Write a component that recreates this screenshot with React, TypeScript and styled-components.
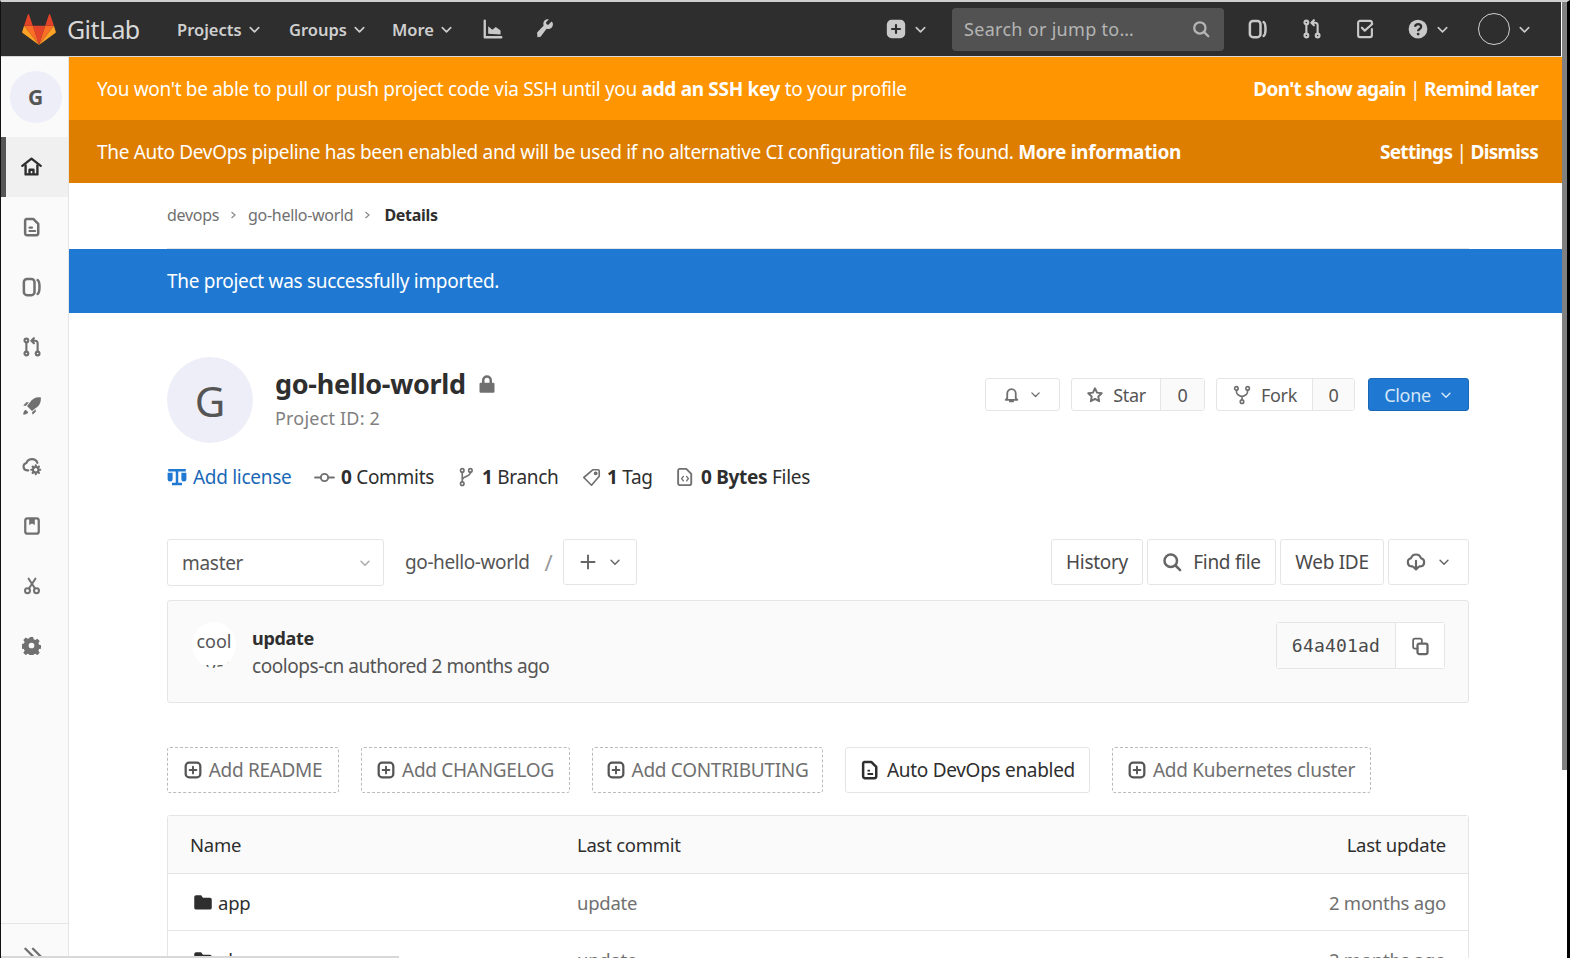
import React from 'react';
import styled, { createGlobalStyle } from 'styled-components';

const GlobalStyle = createGlobalStyle`
  html, body { margin: 0; height: 100%; overflow: hidden; background: #fff; }
  * { box-sizing: border-box; }
  body { font-family: "Noto Sans", "Liberation Sans", sans-serif; color: #2e2e2e; }
`;

const Page = styled.div`
  width: 1570px;
  height: 958px;
  overflow: hidden;
  display: flex;
  flex-direction: column;
  border-left: 1px solid #111;
  border-right: 3px solid #000;
  border-top: 2px solid #cfcfcf;
  position: relative;
`;

const Navbar = styled.header`
  height: 55px;
  flex: none;
  margin-right: 6px;
  background: #2e2e2e;
  border-bottom: 1px solid #d8d8d8;
  display: flex;
  align-items: center;
  padding-left: 21px;
  padding-right: 29px;
  color: #c9c9c9;
`;

const Wordmark = styled.span`
  font-size: 25px;
  color: #d8d8d8;
  margin-left: 11px;
  width: 110px;
  letter-spacing: -0.6px;
`;

const NavLink = styled.span<{ $w: number }>`
  width: ${(p) => p.$w}px;
  flex: none;
  display: flex;
  align-items: center;
  gap: 5px;
  font-size: 16.5px;
  font-weight: 600;
  color: #cfcfcf;
`;

const NavIcon = styled.span<{ $w: number }>`
  width: ${(p) => p.$w}px;
  flex: none;
  display: flex;
  align-items: center;
  gap: 7px;
  color: #c9c9c9;
`;

const Spacer = styled.div`
  flex: 1;
`;

const SearchBox = styled.div`
  width: 272px;
  height: 43px;
  background: #525252;
  border-radius: 4px;
  display: flex;
  align-items: center;
  justify-content: space-between;
  padding: 0 14px 0 12px;
  font-size: 18px;
  color: #b5b5b5;
  margin-right: 24px;
  letter-spacing: 0.3px;
`;

const AvatarRing = styled.span`
  width: 32px;
  height: 32px;
  border-radius: 50%;
  border: 1.5px solid #d0d0d0;
  margin-right: 7px;
  flex: none;
`;

const Body = styled.div`
  flex: 1;
  display: flex;
  min-height: 0;
`;

const Sidebar = styled.aside`
  width: 68px;
  flex: none;
  background: #fafafa;
  border-right: 1px solid #e5e5e5;
  display: flex;
  flex-direction: column;
  position: relative;
`;

const SideAvatarRow = styled.div`
  height: 80px;
  display: flex;
  justify-content: center;
  padding-top: 14px;
  padding-left: 2px;
`;

const SideAvatar = styled.div`
  width: 52px;
  height: 52px;
  border-radius: 50%;
  background: #eeeef8;
  color: #555;
  font-weight: 700;
  font-size: 21px;
  display: flex;
  align-items: center;
  justify-content: center;
`;

const SideItem = styled.div<{ $active?: boolean }>`
  height: 59.87px;
  display: flex;
  align-items: center;
  justify-content: center;
  color: ${(p) => (p.$active ? '#2e2e2e' : '#707070')};
  background: ${(p) => (p.$active ? '#f0f0f0' : 'transparent')};
  border-left: 5px solid ${(p) => (p.$active ? '#555' : 'transparent')};
  padding-right: 11px;
`;

const SideFooter = styled.div`
  margin-top: auto;
  height: 35px;
  border-top: 1px solid #e5e5e5;
  display: flex;
  justify-content: center;
  padding-top: 22px;
  padding-right: 3px;
  color: #707070;
`;

const Main = styled.main`
  flex: 1;
  min-width: 0;
  display: flex;
  flex-direction: column;
  padding-right: 4px;
`;

const Banner = styled.div<{ $bg: string }>`
  height: 63px;
  flex: none;
  background: ${(p) => p.$bg};
  color: #fff;
  display: flex;
  align-items: center;
  justify-content: space-between;
  padding: 0 25px 0 28px;
  font-size: 19px;
  letter-spacing: -0.32px;
  white-space: nowrap;
  b { font-weight: 700; }
`;

const BannerActions = styled.span`
  letter-spacing: -0.7px;
`;

const Container = styled.div`
  width: 1302px;
  margin-left: 98px;
`;

const Breadcrumbs = styled(Container)`
  height: 66px;
  flex: none;
  border-bottom: 1px solid #e5e5e5;
  display: flex;
  align-items: center;
  gap: 10px;
  padding-bottom: 1px;
  font-size: 16px;
  color: #707070;
  letter-spacing: -0.3px;
  b { color: #2e2e2e; font-weight: 700; margin-left: 2px; }
`;

const InfoBanner = styled.div`
  height: 64px;
  flex: none;
  background: #1f78d1;
  color: #fff;
  display: flex;
  align-items: center;
  padding-left: 98px;
  font-size: 19px;
  letter-spacing: -0.3px;
`;

const ProjectHeader = styled(Container)`
  margin-top: 44px;
  height: 86px;
  flex: none;
  display: flex;
  justify-content: space-between;
`;

const ProjectIdentity = styled.div`
  display: flex;
`;

const ProjectAvatar = styled.div`
  width: 86px;
  height: 86px;
  border-radius: 50%;
  background: #eeeef8;
  color: #555;
  font-size: 42px;
  display: flex;
  align-items: center;
  justify-content: center;
  margin-right: 22px;
`;

const ProjectText = styled.div`
  display: flex;
  flex-direction: column;
  padding-top: 8px;
`;

const ProjectTitle = styled.div`
  display: flex;
  align-items: center;
  gap: 11px;
  font-size: 27px;
  font-weight: 700;
  line-height: 38px;
  letter-spacing: -0.3px;
  color: #2e2e2e;
  svg { color: #707070; }
`;

const ProjectId = styled.div`
  font-size: 18px;
  color: #808080;
  line-height: 30px;
  letter-spacing: 0.2px;
`;

const ProjectActions = styled.div`
  display: flex;
  align-items: flex-start;
  padding-top: 21px;
  gap: 11px;
`;

const ButtonGroup = styled.div`
  display: flex;
  height: 33px;
  border: 1px solid #e5e5e5;
  border-radius: 3px;
  font-size: 18px;
  color: #555;
  letter-spacing: -0.3px;
`;

const GroupMain = styled.div<{ $w: number }>`
  width: ${(p) => p.$w}px;
  display: flex;
  align-items: center;
  justify-content: center;
  gap: 9px;
  color: #555;
  svg { color: #707070; }
`;

const GroupCount = styled.div<{ $w: number }>`
  width: ${(p) => p.$w}px;
  display: flex;
  align-items: center;
  justify-content: center;
  border-left: 1px solid #e5e5e5;
  background: #fafafa;
`;

const CloneButton = styled.div`
  height: 33px;
  width: 101px;
  margin-left: 2px;
  background: #1f78d1;
  border: 1px solid #1b69b6;
  border-radius: 3px;
  color: #d5e6f7;
  font-size: 18px;
  letter-spacing: -0.3px;
  display: flex;
  align-items: center;
  justify-content: center;
  gap: 8px;
`;

const Stats = styled(Container)`
  margin-top: 19px;
  height: 30px;
  flex: none;
  display: flex;
  align-items: center;
  font-size: 19px;
  letter-spacing: -0.3px;
  color: #2e2e2e;
  b { font-weight: 700; }
`;

const Stat = styled.span<{ $w: number; $link?: boolean }>`
  width: ${(p) => p.$w}px;
  flex: none;
  display: flex;
  align-items: center;
  gap: 6px;
  white-space: pre;
  color: ${(p) => (p.$link ? '#1b69b6' : '#2e2e2e')};
  svg { color: ${(p) => (p.$link ? '#1f78d1' : '#707070')}; flex: none; }
`;

const TreeBar = styled(Container)`
  margin-top: 47px;
  height: 48px;
  flex: none;
  display: flex;
  align-items: flex-start;
  justify-content: space-between;
`;

const TreeLeft = styled.div`
  display: flex;
  align-items: flex-start;
`;

const TreeRight = styled.div`
  display: flex;
  gap: 4px;
`;

const BranchSelect = styled.div`
  width: 217px;
  height: 47px;
  border: 1px solid #e5e5e5;
  border-radius: 3px;
  padding: 0 11px 0 14px;
  display: flex;
  align-items: center;
  justify-content: space-between;
  font-size: 19px;
  color: #555;
  letter-spacing: -0.3px;
  svg { color: #aaa; }
`;

const PathCrumb = styled.div`
  height: 46px;
  display: flex;
  align-items: center;
  font-size: 19px;
  color: #555;
  letter-spacing: -0.4px;
  margin-left: 21px;
  i { font-style: normal; color: #999; margin-left: 15px; margin-right: 11px; font-size: 22px; }
`;

const ToolButton = styled.div<{ $w: number }>`
  width: ${(p) => p.$w}px;
  height: 46px;
  border: 1px solid #e5e5e5;
  border-radius: 3px;
  display: flex;
  align-items: center;
  justify-content: center;
  gap: 11px;
  font-size: 19px;
  color: #4a4a4a;
  letter-spacing: -0.3px;
  svg { color: #666; }
`;

const CommitCard = styled(Container)`
  margin-top: 13px;
  height: 103px;
  flex: none;
  border: 1px solid #e5e5e5;
  border-radius: 3px;
  background: #fafafa;
  display: flex;
  align-items: flex-start;
  justify-content: space-between;
  padding: 21px 23px 0 24px;
`;

const CommitLeft = styled.div`
  display: flex;
  align-items: flex-start;
  gap: 16px;
`;

const BrokenAvatar = styled.div`
  width: 44px;
  height: 46px;
  border-radius: 50%;
  background: #fff;
  overflow: hidden;
  font-size: 18px;
  line-height: 27px;
  text-align: center;
  padding: 6px 2px 0;
  color: #555;
  word-break: break-all;
`;

const CommitText = styled.div`
  display: flex;
  flex-direction: column;
  padding-top: 2px;
`;

const CommitTitle = styled.div`
  font-size: 18px;
  font-weight: 700;
  line-height: 28px;
  letter-spacing: -0.3px;
  color: #2e2e2e;
`;

const CommitMeta = styled.div`
  font-size: 19px;
  line-height: 29px;
  color: #555;
  letter-spacing: -0.45px;
`;

const ShaGroup = styled.div`
  height: 47px;
  display: flex;
  border: 1px solid #e5e5e5;
  border-radius: 3px;
`;

const Sha = styled.div`
  width: 119px;
  display: flex;
  align-items: center;
  justify-content: center;
  font-family: "DejaVu Sans Mono", "Liberation Mono", monospace;
  font-size: 18px;
  letter-spacing: 0.2px;
  color: #4a4a4a;
  background: #fafafa;
  border-right: 1px solid #e5e5e5;
`;

const CopyButton = styled.div`
  width: 48px;
  background: #fff;
  display: flex;
  align-items: center;
  justify-content: center;
  color: #666;
`;

const QuickLinks = styled(Container)`
  margin-top: 44px;
  height: 46px;
  flex: none;
  display: flex;
  gap: 22px;
`;

const QuickLink = styled.div<{ $w: number; $solid?: boolean }>`
  width: ${(p) => p.$w}px;
  flex: none;
  height: 46px;
  border: 1px ${(p) => (p.$solid ? 'solid #e5e5e5' : 'dashed #bbb')};
  border-radius: 3px;
  display: flex;
  align-items: center;
  justify-content: center;
  gap: 7px;
  font-size: 19px;
  letter-spacing: -0.3px;
  white-space: nowrap;
  color: ${(p) => (p.$solid ? '#2e2e2e' : '#707070')};
  svg { color: ${(p) => (p.$solid ? '#2e2e2e' : '#555')}; }
`;

const FileTable = styled(Container)`
  margin-top: 22px;
  border: 1px solid #e5e5e5;
  border-radius: 3px 3px 0 0;
  flex: none;
`;

const FileRow = styled.div<{ $head?: boolean }>`
  height: ${(p) => (p.$head ? 58 : 57)}px;
  display: grid;
  grid-template-columns: 387px 1fr auto;
  align-items: center;
  padding: 0 22px;
  background: ${(p) => (p.$head ? '#fafafa' : '#fff')};
  border-bottom: 1px solid #e5e5e5;
  font-size: 18.5px;
  letter-spacing: -0.25px;
  color: ${(p) => (p.$head ? '#2e2e2e' : '#707070')};
`;

const FileName = styled.span`
  display: flex;
  align-items: center;
  gap: 5px;
  color: #2e2e2e;
  padding-left: 3px;
`;

const Scrollbar = styled.div`
  position: absolute;
  top: -2px;
  right: 0;
  width: 5px;
  height: 770px;
  background: #808080;
`;

const StatusEdge = styled.div`
  position: absolute;
  left: 0;
  bottom: 0;
  width: 398px;
  height: 2px;
  background: #d8d8d8;
`;

type IconProps = { s?: number };

const Svg: React.FC<React.PropsWithChildren<IconProps>> = ({ s = 20, children }) => (
  <svg width={s} height={s} viewBox="0 0 16 16" fill="none" stroke="currentColor" strokeWidth={1.7} strokeLinecap="round" strokeLinejoin="round">
    {children}
  </svg>
);

const Chevron: React.FC<IconProps> = ({ s = 15 }) => (
  <Svg s={s}><path d="M3.5 6l4.5 4.5L12.5 6" /></Svg>
);
const ChartIcon = () => (
  <Svg s={22}><path d="M2 2v12h12" /><path d="M4.5 11.5V6l3 2.5 2.5-2 3.5 2.5v3z" fill="currentColor" stroke="none" /></Svg>
);
const WrenchIcon = () => (
  <Svg s={22}><path d="M13.5 2.5L11 5l-1.3-.7L9.5 3l2-2c-2.2-.5-4 1-4 3.2 0 .5.1 1 .3 1.3L3 10.5 3.2 14l2.3-.3 4.4-5.9c2.5.7 4.6-1 4.6-3.3 0-.7-.2-1.4-1-2z" fill="currentColor" stroke="none" /></Svg>
);
const PlusBoxIcon: React.FC<IconProps> = ({ s = 20 }) => (
  <Svg s={s}><rect x="1.5" y="1.5" width="13" height="13" rx="3" fill="currentColor" /><path d="M8 4.8v6.4M4.8 8h6.4" stroke="#2e2e2e" /></Svg>
);
const PlusOutlineIcon: React.FC<IconProps> = ({ s = 18 }) => (
  <Svg s={s}><rect x="1.5" y="1.5" width="13" height="13" rx="3" strokeWidth={2} /><path d="M8 5v6M5 8h6" /></Svg>
);
const SearchIcon: React.FC<IconProps> = ({ s = 18 }) => (
  <Svg s={s}><circle cx="7" cy="7" r="5" strokeWidth={2} /><path d="M11 11l3.5 3.5" strokeWidth={2} /></Svg>
);
const BoardIcon: React.FC<IconProps> = ({ s = 20 }) => (
  <Svg s={s}><rect x="1.5" y="1.5" width="8.5" height="13" rx="2.5" strokeWidth={2} /><path d="M12.5 2.5c2 1 2 10 0 11" strokeWidth={2} /></Svg>
);
const MergeIcon: React.FC<IconProps> = ({ s = 20 }) => (
  <Svg s={s}><circle cx="3.5" cy="2.8" r="1.5" /><circle cx="3.5" cy="13.2" r="1.5" /><circle cx="12.5" cy="13.2" r="1.5" /><path d="M3.5 4.500v7M12.500 11.500V5c0-1.200-.8-2-2-2H8M9.500 1L7.500 3l2 2" /></Svg>
);
const TodoIcon: React.FC<IconProps> = ({ s = 20 }) => (
  <Svg s={s}><path d="M13.500 3.500V3A1.500 1.500 0 0 0 12 1.500H4A1.500 1.500 0 0 0 2.500 3v10A1.500 1.500 0 0 0 4 14.500h8a1.500 1.500 0 0 0 1.500-1.500V8" /><path d="M5.500 7l2.300 2.300 6-5.300" /></Svg>
);
const HelpIcon: React.FC<IconProps> = ({ s = 20 }) => (
  <svg width={s} height={s} viewBox="0 0 16 16">
    <circle cx="8" cy="8" r="7.5" fill="currentColor" />
    <path d="M5.600 6.200C5.800 4.800 6.800 4 8.100 4c1.400 0 2.400.9 2.400 2.100 0 1.900-2.400 1.900-2.400 3.600" fill="none" stroke="#2e2e2e" strokeWidth={1.8} />
    <circle cx="8.100" cy="12" r="1.100" fill="#2e2e2e" />
  </svg>
);
const HomeIcon = () => (
  <svg width={21} height={21} viewBox="0 0 16 16" fill="none" stroke="currentColor" strokeWidth={1.8} strokeLinejoin="round">
    <path d="M1 7.500L8 2l7 5.500" strokeLinecap="round" />
    <path d="M3.500 6.500V14h9V6.500" />
    <path d="M6.500 14v-3.500h3V14" />
  </svg>
);
const DocIcon: React.FC<IconProps> = ({ s = 20 }) => (
  <Svg s={s}><path d="M3.500 1.500h5.500l4 4V13a1.500 1.500 0 0 1-1.500 1.500h-8A1.500 1.500 0 0 1 2.500 13V3a1.500 1.500 0 0 1 1-1.500z" strokeWidth={2} /><path d="M6 8.500h2M6 11.200h4.500" /></Svg>
);
const RocketIcon = () => (
  <svg width={20} height={20} viewBox="0 0 16 16" fill="currentColor">
    <path d="M15 1c-4-.4-7 1-9 4.500L4 8l4 4 2.500-2C14 8 15.500 5 15 1z" />
    <path d="M1 7.500l2.500-2.500h2L3 8zM8.500 15l2.500-2.500v-2L8 13zM1 15c0-2 .7-3.400 2-4l2 2c-.6 1.300-2 2-4 2z" />
  </svg>
);
const OpsIcon = () => (
  <svg width={20} height={20} viewBox="0 0 16 16" fill="none" stroke="currentColor" strokeWidth={1.7} strokeLinecap="round">
    <path d="M5 11.500H4A3 3 0 0 1 3.500 5.600C4.300 3.500 5.800 2.500 8 2.500c2.300 0 3.800 1.300 4.300 3" />
    <circle cx="11" cy="11" r="2.200" strokeWidth={1.6} />
    <path d="M11 7.400v1.200M11 13.400v1.200M7.400 11h1.200M13.400 11h1.200M8.500 8.500l.8.8M12.700 12.700l.8.8M13.500 8.500l-.8.8M9.300 12.700l-.8.8" />
  </svg>
);
const WikiIcon = () => (
  <svg width={18} height={18} viewBox="0 0 16 16" fill="none" stroke="currentColor" strokeWidth={2}>
    <rect x="2" y="1.200" width="12" height="13.600" rx="2" />
    <path d="M5.500 1.200v6l2.500-1.500 2.500 1.500v-6z" fill="currentColor" stroke="none" />
  </svg>
);
const ScissorsIcon = () => (
  <svg width={18} height={18} viewBox="0 0 16 16" fill="none" stroke="currentColor" strokeWidth={1.8} strokeLinecap="round">
    <circle cx="4" cy="12.200" r="2.200" />
    <circle cx="12" cy="12.200" r="2.200" />
    <path d="M5.300 10.200L11 1.500M10.700 10.200L5 1.500" />
  </svg>
);
const GearIcon = () => (
  <svg width={19} height={19} viewBox="0 0 16 16" fill="currentColor">
    <path fillRule="evenodd" d="M6.600.8h2.800l.4 2 1.400.6 1.700-1.100 2 2-1.100 1.700.6 1.400 2 .4v2.800l-2 .4-.6 1.400 1.100 1.700-2 2-1.700-1.100-1.400.6-.4 2H6.600l-.4-2-1.400-.6-1.700 1.100-2-2 1.100-1.700-.6-1.400-2-.4V6.800l2-.4.6-1.400-1.100-1.700 2-2 1.700 1.100 1.400-.6zM8 5.600a2.400 2.400 0 1 0 0 4.800 2.400 2.400 0 0 0 0-4.800z" />
  </svg>
);
const DoubleChevron = () => (
  <Svg s={22}><path d="M2.500 2l6 6-6 6M8 2l6 6-6 6" /></Svg>
);
const LockIcon = () => (
  <svg width={20} height={20} viewBox="0 0 16 16" fill="currentColor">
    <path fillRule="evenodd" d="M3 7h1V5a4 4 0 0 1 8 0v2h1a1 1 0 0 1 1 1v6a1 1 0 0 1-1 1H3a1 1 0 0 1-1-1V8a1 1 0 0 1 1-1zm3 0h4V5a2 2 0 0 0-4 0z" />
  </svg>
);
const BellIcon = () => (
  <Svg s={17}><path d="M4 11.500V7a4 4 0 0 1 8 0v4.500l1.500 1.500h-11zM6.500 14.500h3" /></Svg>
);
const StarIcon = () => (
  <Svg s={18}><path d="M8 2l1.800 3.900 4.200.5-3.100 2.900.8 4.200L8 11.400l-3.700 2.100.8-4.200L2 6.400l4.200-.5z" /></Svg>
);
const ForkIcon: React.FC<IconProps> = ({ s = 20 }) => (
  <Svg s={s}><circle cx="3.500" cy="2.700" r="1.400" strokeWidth={1.3} /><circle cx="12.500" cy="2.700" r="1.400" strokeWidth={1.3} /><circle cx="8" cy="13.300" r="1.400" strokeWidth={1.3} /><path d="M3.500 4.300c0 3 1 3.800 4.500 5 3.500-1.200 4.500-2 4.500-5M8 9.300v2.500" strokeWidth={1.3} /></Svg>
);
const BranchIcon = () => (
  <Svg s={20}><circle cx="5" cy="2.700" r="1.400" strokeWidth={1.3} /><circle cx="5" cy="13.300" r="1.400" strokeWidth={1.3} /><circle cx="11.500" cy="2.700" r="1.400" strokeWidth={1.3} /><path d="M5 4.300v7.400M11.500 4.300c0 3.500-6.500 3-6.500 6" strokeWidth={1.3} /></Svg>
);
const ScaleIcon = () => (
  <svg width={20} height={20} viewBox="0 0 16 16" fill="currentColor">
    <path d="M1 1.500h14v2H9v9h3v2H4v-2h3v-9H1z" />
    <path fillRule="evenodd" d="M.5 4.500h4v5a2 2 0 0 1-4 0zM11.500 4.500h4v5a2 2 0 0 1-4 0z" />
  </svg>
);
const CommitIcon = () => (
  <Svg s={21}><circle cx="8" cy="8" r="2.800" strokeWidth={1.4} /><path d="M.8 8h4.400M10.800 8h4.400" strokeWidth={1.4} /></Svg>
);
const TagIcon = () => (
  <Svg s={19}><path d="M9 1.500h4.500a1 1 0 0 1 1 1V7L8 14.500 1.500 8z" strokeWidth={1.4} /><circle cx="11.500" cy="4.500" r=".8" fill="currentColor" /></Svg>
);
const FileCodeIcon = () => (
  <Svg s={20}><path d="M3.500 1.500h5.500l4 4V13a1.500 1.500 0 0 1-1.500 1.500h-8A1.500 1.500 0 0 1 2.500 13V3a1.500 1.500 0 0 1 1-1.500z" strokeWidth={1.5} /><path d="M6.700 7.500L5.300 9.300l1.400 1.800M9.300 7.500l1.400 1.800-1.400 1.800" strokeWidth={1.1} /></Svg>
);
const CloudDownIcon = () => (
  <Svg s={20}><path d="M5 11.500H4.500A3.300 3.300 0 0 1 4 5C4.600 3.200 6 2 8 2s3.400 1.200 4 3a3.300 3.300 0 0 1-.5 6.500H11" /><path d="M8 7v7M6 12l2 2 2-2" /></Svg>
);
const CopyIcon = () => (
  <Svg s={20}><path d="M6 10H4A1.500 1.500 0 0 1 2.500 8.500V3.500A1.500 1.500 0 0 1 4 2h4a1.500 1.500 0 0 1 1.500 1.500V5" strokeWidth={1.4} /><rect x="6" y="6" width="8" height="8.500" rx="1.500" strokeWidth={1.8} /></Svg>
);
const SolidDocIcon = () => (
  <svg width={20} height={20} viewBox="0 0 16 16" fill="none" stroke="currentColor" strokeWidth={2} strokeLinejoin="round">
    <path d="M3.500 1.500h5.500l4 4V13a1.500 1.500 0 0 1-1.500 1.500h-8A1.500 1.500 0 0 1 2.500 13V3a1.500 1.500 0 0 1 1-1.500z" />
    <path d="M6 8.500h2M6 11.200h4.500" strokeWidth={1.5} />
  </svg>
);
const FolderIcon = () => (
  <svg width={20} height={20} viewBox="0 0 16 16" fill="#2e2e2e">
    <path d="M2.500 2.500h4l1.500 2h5.500A1.500 1.500 0 0 1 15 6v6.500a1.500 1.500 0 0 1-1.500 1.500h-11A1.500 1.500 0 0 1 1 12.500V4a1.500 1.500 0 0 1 1.500-1.500z" />
  </svg>
);
const CrumbChevron = () => (
  <svg width={9} height={12} viewBox="0 0 9 12" fill="none" stroke="#888" strokeWidth={1.2}><path d="M2.500 3l3.500 3-3.500 3" /></svg>
);
const Tanuki = () => (
  <svg width={34} height={31} viewBox="0 0 36 33">
    <path fill="#e24329" d="M18 33l6.600-20.400H11.400z" />
    <path fill="#fc6d26" d="M18 33L11.400 12.600H2.100z" />
    <path fill="#fca326" d="M2.100 12.600L.1 18.800c-.2.600 0 1.200.5 1.500L18 33z" />
    <path fill="#e24329" d="M2.100 12.600h9.300L7.400.6c-.2-.6-1.100-.6-1.300 0z" />
    <path fill="#fc6d26" d="M18 33l6.600-20.400h9.300z" />
    <path fill="#fca326" d="M33.900 12.600l2 6.200c.2.600 0 1.200-.5 1.500L18 33z" />
    <path fill="#e24329" d="M33.900 12.600h-9.300l4-12c.2-.6 1.100-.6 1.300 0z" />
  </svg>
);

const sideIcons = [<DocIcon key="d" />, <BoardIcon key="b" />, <MergeIcon key="m" />, <RocketIcon key="r" />, <OpsIcon key="o" />, <WikiIcon key="w" />, <ScissorsIcon key="s" />, <GearIcon key="g" />];

const App: React.FC = () => (
  <Page>
    <GlobalStyle />
    <Navbar>
      <Tanuki />
      <Wordmark>GitLab</Wordmark>
      <NavLink $w={112}>Projects <Chevron /></NavLink>
      <NavLink $w={103}>Groups <Chevron /></NavLink>
      <NavLink $w={90}>More <Chevron /></NavLink>
      <NavIcon $w={51}><ChartIcon /></NavIcon>
      <NavIcon $w={30}><WrenchIcon /></NavIcon>
      <Spacer />
      <NavIcon $w={66}><PlusBoxIcon /><Chevron /></NavIcon>
      <SearchBox>Search or jump to…<SearchIcon /></SearchBox>
      <NavIcon $w={54}><BoardIcon /></NavIcon>
      <NavIcon $w={53}><MergeIcon /></NavIcon>
      <NavIcon $w={53}><TodoIcon /></NavIcon>
      <NavIcon $w={70}><HelpIcon /><Chevron /></NavIcon>
      <AvatarRing />
      <Chevron />
    </Navbar>
    <Body>
      <Sidebar>
        <SideAvatarRow><SideAvatar>G</SideAvatar></SideAvatarRow>
        <SideItem $active><HomeIcon /></SideItem>
        {sideIcons.map((icon) => (
          <SideItem key={icon.key}>{icon}</SideItem>
        ))}
        <SideFooter><DoubleChevron /></SideFooter>
      </Sidebar>
      <Main>
        <Banner $bg="#ff9500">
          <span>You won't be able to pull or push project code via SSH until you <b>add an SSH key</b> to your profile</span>
          <BannerActions><b>Don't show again</b> | <b>Remind later</b></BannerActions>
        </Banner>
        <Banner $bg="#de7e00">
          <span>The Auto DevOps pipeline has been enabled and will be used if no alternative CI configuration file is found. <b>More information</b></span>
          <BannerActions><b>Settings</b> | <b>Dismiss</b></BannerActions>
        </Banner>
        <Breadcrumbs>
          devops <CrumbChevron /> go-hello-world <CrumbChevron /> <b>Details</b>
        </Breadcrumbs>
        <InfoBanner>The project was successfully imported.</InfoBanner>
        <ProjectHeader>
          <ProjectIdentity>
            <ProjectAvatar>G</ProjectAvatar>
            <ProjectText>
              <ProjectTitle>go-hello-world <LockIcon /></ProjectTitle>
              <ProjectId>Project ID: 2</ProjectId>
            </ProjectText>
          </ProjectIdentity>
          <ProjectActions>
            <ButtonGroup><GroupMain $w={73}><BellIcon /><Chevron s={13} /></GroupMain></ButtonGroup>
            <ButtonGroup>
              <GroupMain $w={88}><StarIcon />Star</GroupMain>
              <GroupCount $w={44}>0</GroupCount>
            </ButtonGroup>
            <ButtonGroup>
              <GroupMain $w={95}><ForkIcon />Fork</GroupMain>
              <GroupCount $w={42}>0</GroupCount>
            </ButtonGroup>
            <CloneButton>Clone <Chevron s={14} /></CloneButton>
          </ProjectActions>
        </ProjectHeader>
        <Stats>
          <Stat $w={147} $link><ScaleIcon />Add license</Stat>
          <Stat $w={142}><CommitIcon /><span><b>0</b> Commits</span></Stat>
          <Stat $w={126}><BranchIcon /><span><b>1</b> Branch</span></Stat>
          <Stat $w={93}><TagIcon /><span><b>1</b> Tag</span></Stat>
          <Stat $w={160}><FileCodeIcon /><span><b>0 Bytes</b> Files</span></Stat>
        </Stats>
        <TreeBar>
          <TreeLeft>
            <BranchSelect>master <Chevron s={14} /></BranchSelect>
            <PathCrumb>go-hello-world<i>/</i></PathCrumb>
            <ToolButton $w={74}>
              <svg width={18} height={18} viewBox="0 0 16 16" fill="none" stroke="currentColor" strokeWidth={1.7}><path d="M8 1.500v13M1.500 8h13" /></svg>
              <Chevron s={14} />
            </ToolButton>
          </TreeLeft>
          <TreeRight>
            <ToolButton $w={92}>History</ToolButton>
            <ToolButton $w={129}><SearchIcon s={20} />Find file</ToolButton>
            <ToolButton $w={104}>Web IDE</ToolButton>
            <ToolButton $w={81}><CloudDownIcon /><Chevron s={14} /></ToolButton>
          </TreeRight>
        </TreeBar>
        <CommitCard>
          <CommitLeft>
            <BrokenAvatar>cool avatar</BrokenAvatar>
            <CommitText>
              <CommitTitle>update</CommitTitle>
              <CommitMeta>coolops-cn authored 2 months ago</CommitMeta>
            </CommitText>
          </CommitLeft>
          <ShaGroup>
            <Sha>64a401ad</Sha>
            <CopyButton><CopyIcon /></CopyButton>
          </ShaGroup>
        </CommitCard>
        <QuickLinks>
          <QuickLink $w={172}><PlusOutlineIcon />Add README</QuickLink>
          <QuickLink $w={209}><PlusOutlineIcon />Add CHANGELOG</QuickLink>
          <QuickLink $w={231}><PlusOutlineIcon />Add CONTRIBUTING</QuickLink>
          <QuickLink $w={245} $solid><SolidDocIcon />Auto DevOps enabled</QuickLink>
          <QuickLink $w={259}><PlusOutlineIcon />Add Kubernetes cluster</QuickLink>
        </QuickLinks>
        <FileTable>
          <FileRow $head><span>Name</span><span>Last commit</span><span>Last update</span></FileRow>
          <FileRow><FileName><FolderIcon />app</FileName><span>update</span><span>2 months ago</span></FileRow>
          <FileRow><FileName><FolderIcon />aks</FileName><span>update</span><span>2 months ago</span></FileRow>
        </FileTable>
      </Main>
    </Body>
    <Scrollbar />
    <StatusEdge />
  </Page>
);

export default App;
